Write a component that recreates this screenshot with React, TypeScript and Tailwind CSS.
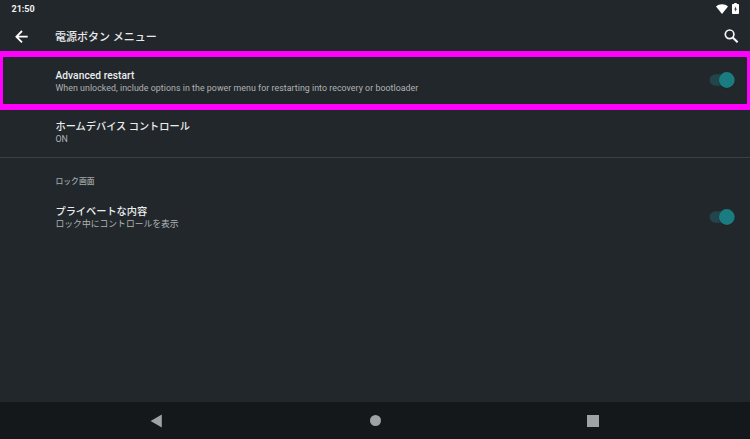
import type { ReactNode } from "react";

function Switch() {
  return (
    <svg width="26" height="20" viewBox="0 0 26 20" className="mt-[1px] shrink-0">
      <rect x="0.6" y="4.2" width="22" height="11.6" rx="5.8" fill="#21454a" />
      <circle cx="17.8" cy="10.6" r="8.1" fill="#1b2023" opacity="0.6" />
      <circle cx="17.8" cy="10" r="7.9" fill="#1a7b80" />
    </svg>
  );
}

function StatusBar() {
  return (
    <div className="flex h-[18px] items-center justify-between pl-[11.5px] pr-[11px]">
      <span className="text-[9px] font-bold leading-[18px] text-[#f1f2f2]">21:50</span>
      <div className="flex items-center gap-[4px] pb-[1px]">
        <svg width="12" height="10" viewBox="0 0 12 10" fill="#fff">
          <path d="M6 10 0 2.6C1.7 1 3.7.2 6 .2s4.3.8 6 2.4z" />
        </svg>
        <svg width="7" height="11" viewBox="0 0 7 11">
          <path d="M2.2 0h2.6v1H6.2c.5 0 .8.3.8.8v8.4c0 .5-.3.8-.8.8H.8a.8.8 0 0 1-.8-.8V1.8C0 1.3.3 1 .8 1h1.4z" fill="#fff" />
          <path d="M3.9 3.4 2.2 6.4h1.1V8.8L4.9 5.8H3.9z" fill="#22272b" />
        </svg>
      </div>
    </div>
  );
}

function AppBar() {
  return (
    <header className="flex h-[33px] items-center pl-[15px] pr-[11px] pt-[4px]">
      <svg width="13" height="13" viewBox="0 0 13 13" fill="none" stroke="#fff" strokeWidth="1.8">
        <path d="M12.7 6.7H1.5M7 1 1.4 6.7l5.6 5.6" />
      </svg>
      <h1 className="ml-[27px] flex-1 pt-[2px] text-[11px] font-medium leading-4 text-[#e8eaea]">電源ボタン メニュー</h1>
      <svg width="15" height="15" viewBox="0 0 15 15" fill="none" stroke="#f5f5f5">
        <circle cx="5.6" cy="5.3" r="4.3" strokeWidth="1.7" />
        <path d="m8.7 8.4 4.9 4.9" strokeWidth="2.1" />
      </svg>
    </header>
  );
}

type PreferenceProps = { title: string; summary: string; action?: ReactNode };

function Preference({ title, summary, action }: PreferenceProps) {
  return (
    <div className="flex w-full items-start justify-between">
      <div>
        <div className="text-[10.2px] font-medium leading-[13px] text-[#eceeee]">{title}</div>
        <div className="text-[8.8px] leading-[12px] text-[#b0b3b4]">{summary}</div>
      </div>
      {action}
    </div>
  );
}

function NavigationBar() {
  return (
    <nav className="flex h-[37px] items-center bg-[#14181b] pl-[150px]">
      <svg width="12" height="14" viewBox="0 0 12 14" fill="#a0a2a3">
        <path d="M11.8.6v12.8L.6 7z" />
      </svg>
      <div className="ml-[208px] size-[11px] rounded-full bg-[#a0a2a3]" />
      <div className="ml-[206px] size-[12px] bg-[#a0a2a3]" />
    </nav>
  );
}

export default function App() {
  return (
    <div className="flex h-[439px] w-[750px] flex-col overflow-hidden bg-[#22272b] font-['Roboto','Noto_Sans_CJK_JP',sans-serif]">
      <StatusBar />
      <AppBar />
      <main className="flex flex-1 flex-col">
        <section className="flex h-[59px] items-start border-x-[3px] border-y-[6px] border-[#ff00ff] pl-[52.5px] pr-[12px] pt-[12px] tracking-[0.05px]">
          <Preference
            title="Advanced restart"
            summary="When unlocked, include options in the power menu for restarting into recovery or bootloader"
            action={<Switch />}
          />
        </section>
        <section className="flex h-[48px] items-start border-b border-[#3b4043] pl-[55.5px] pt-[10px]">
          <Preference title="ホームデバイス コントロール" summary="ON" />
        </section>
        <h2 className="pl-[55.5px] pt-[18px] text-[7.8px] font-medium leading-[12px] text-[#a3a7a9]">ロック画面</h2>
        <section className="flex pl-[55.5px] pr-[15px] pt-[17px]">
          <Preference
            title="プライベートな内容"
            summary="ロック中にコントロールを表示"
            action={<div className="pt-[1px]"><Switch /></div>}
          />
        </section>
      </main>
      <NavigationBar />
    </div>
  );
}
